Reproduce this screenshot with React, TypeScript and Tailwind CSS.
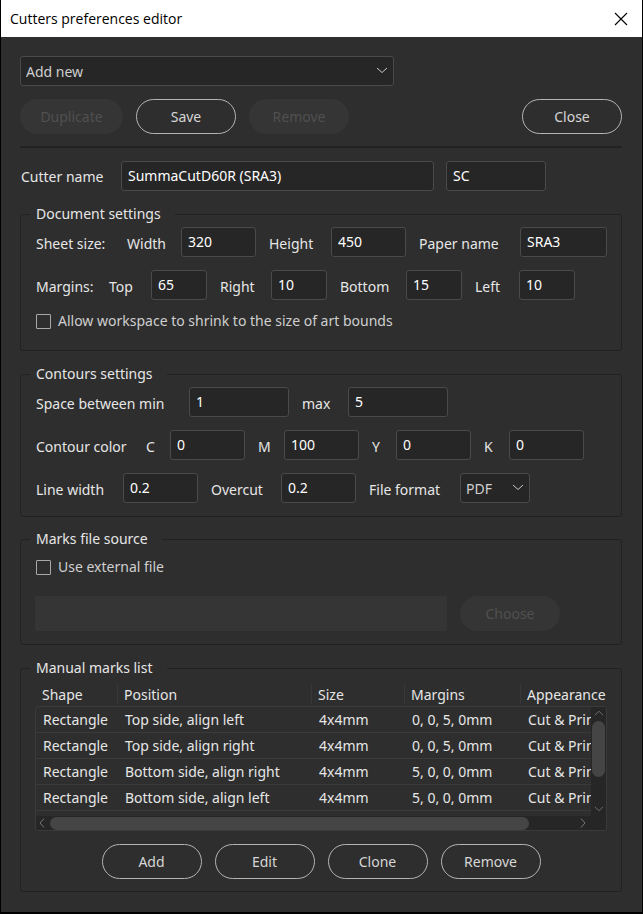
import type { ReactNode } from 'react';

const boxClass = 'h-[30px] rounded-[3px] border border-[#4a4a4a] bg-[#262626] text-[14px] outline-none';
const fieldClass = `${boxClass} px-[6px] pb-0.5 text-white`;
const selectClass = `${boxClass} col-start-1 row-start-1 w-full appearance-none px-[5px] text-[#cfcfcf]`;
const pillClass =
  'h-[35px] w-[100px] shrink-0 rounded-full border border-[#b4b4b4] text-[14px] text-[#d6d6d6]';
const disabledPillClass = 'h-[35px] shrink-0 rounded-full bg-[#353535] text-[14px] text-[#505050]';

function Chevron({ className }: { className: string }) {
  return (
    <svg className={className} viewBox="0 0 12 7" fill="none" stroke="currentColor" aria-hidden="true">
      <path d="M1 1 6 5.5 11 1" />
    </svg>
  );
}

function Select({ id, label, option }: { id: string; label?: string; option: string }) {
  return (
    <div className="grid items-center">
      <select id={id} aria-label={label} className={selectClass}>
        <option>{option}</option>
      </select>
      <Chevron className="pointer-events-none col-start-1 row-start-1 mr-[6px] mb-0.5 h-[7px] w-3 justify-self-end text-[#c8c8c8]" />
    </div>
  );
}

function Group({ title, className, children }: { title: string; className: string; children: ReactNode }) {
  return (
    <fieldset className={`min-w-0 rounded-[3px] border border-[#222222] px-[15px] ${className}`}>
      <legend className="-ml-[6px] pr-[14px] pl-[6px] text-[14px] leading-5">{title}</legend>
      {children}
    </fieldset>
  );
}

function Row({ children }: { children: ReactNode }) {
  return <div className="mb-[13px] flex items-center">{children}</div>;
}

type FieldProps = { id: string; label: string; labelWidth: string; width: string; value: string };

function Field({ id, label, labelWidth, width, value }: FieldProps) {
  return (
    <div className="mr-[13px] flex shrink-0 items-center last:mr-0">
      <label htmlFor={id} className={`pt-0.5 whitespace-nowrap ${labelWidth}`}>
        {label}
      </label>
      <input id={id} className={`${fieldClass} ${width}`} defaultValue={value} />
    </div>
  );
}

function Check({ id, label }: { id: string; label: string }) {
  return (
    <div className="flex items-center gap-[7px] text-[#cfcfcf]">
      <input
        id={id}
        type="checkbox"
        className="size-[15px] appearance-none rounded-[1px] border border-[#a8a8a8] checked:bg-[#a8a8a8]"
      />
      <label htmlFor={id} className="leading-4">
        {label}
      </label>
    </div>
  );
}

const marks = [
  ['Rectangle', 'Top side, align left', '4x4mm', '0, 0, 5, 0mm', 'Cut & Print'],
  ['Rectangle', 'Top side, align right', '4x4mm', '0, 0, 5, 0mm', 'Cut & Print'],
  ['Rectangle', 'Bottom side, align right', '4x4mm', '5, 0, 0, 0mm', 'Cut & Print'],
  ['Rectangle', 'Bottom side, align left', '4x4mm', '5, 0, 0, 0mm', 'Cut & Print'],
];

const columns = [
  { name: 'Shape', width: 'w-[82px]' },
  { name: 'Position', width: 'w-[194px]' },
  { name: 'Size', width: 'w-[93px]' },
  { name: 'Margins', width: 'w-[116px]' },
  { name: 'Appearance', width: '' },
];

function MarksTable() {
  return (
    <div className="relative -mx-px h-[147px] overflow-hidden pl-px">
      <table className="w-full table-fixed border-separate border-spacing-0 text-left">
        <thead>
          <tr>
            {columns.map((c) => (
              <th key={c.name} className={`h-[23px] p-0 align-top font-normal ${c.width}`}>
                <div className="h-5 border-r border-[#383838] pl-[6px] leading-[22px] whitespace-nowrap [th:last-child>&]:border-0">
                  {c.name}
                </div>
              </th>
            ))}
          </tr>
        </thead>
        <tbody>
          {marks.map((m) => (
            <tr key={m[1]}>
              {m.map((cell, i) => (
                <td
                  key={i}
                  className="h-[26px] overflow-hidden border-b border-[#3a3a3a] p-0 pl-[7px] whitespace-nowrap"
                >
                  {cell}
                </td>
              ))}
            </tr>
          ))}
        </tbody>
      </table>
      <div className="absolute inset-x-0 top-[22px] bottom-0 flex flex-col overflow-hidden rounded-[3px] border border-[#3a3a3a]">
        <div className="flex min-h-0 flex-1 justify-end">
          <div className="flex w-[15px] flex-col items-center bg-[#262626] text-[#777777]">
            <Chevron className="my-[3px] h-[6px] w-[10px] shrink-0 rotate-180" />
            <div className="mt-0.5 h-14 w-[13px] shrink-0 rounded-full bg-[#454545]" />
            <Chevron className="mt-auto mb-1 h-[6px] w-[10px] shrink-0" />
          </div>
        </div>
        <div className="flex h-[14px] items-center bg-[#262626] text-[#777777]">
          <svg className="ml-[3px] h-[10px] w-[6px]" viewBox="0 0 6 10" fill="none" stroke="currentColor">
            <path d="M5 0.5 1 5 5 9.5" />
          </svg>
          <div className="ml-[5px] h-[13px] w-[84%] rounded-full bg-[#454545]" />
          <svg className="mr-5 ml-auto h-[10px] w-[6px]" viewBox="0 0 6 10" fill="none" stroke="currentColor">
            <path d="M1 0.5 5 5 1 9.5" />
          </svg>
        </div>
      </div>
    </div>
  );
}

export default function App() {
  return (
    <div className="flex min-h-screen flex-col border-x border-b-2 border-black bg-[#2e2e2e] font-['Noto_Sans',sans-serif] text-[14px] text-[#e6e6e6]">
      <header className="flex h-[37px] items-center justify-between bg-white pr-[14px] pl-[9px] text-black">
        <h1 className="font-['Open_Sans',sans-serif] text-[14px]">Cutters preferences editor</h1>
        <button type="button" aria-label="Close window">
          <svg className="size-[14px]" viewBox="0 0 14 14" fill="none" stroke="currentColor" strokeWidth="1.1">
            <path d="m1 1 12 12M13 1 1 13" />
          </svg>
        </button>
      </header>
      <main className="pt-[19px] pr-5 pl-[19px]">
        <div className="w-[374px]">
          <Select id="cutter" label="Cutter" option="Add new" />
        </div>

        <div className="mt-[13px] flex gap-[13px]">
          <button type="button" disabled className={`${disabledPillClass} w-[103px]`}>
            Duplicate
          </button>
          <button type="button" className={pillClass}>
            Save
          </button>
          <button type="button" disabled className={`${disabledPillClass} w-[100px]`}>
            Remove
          </button>
          <button type="button" className={`${pillClass} ml-auto`}>
            Close
          </button>
        </div>

        <hr className="mt-3 mb-[13px] border-t-2 border-[#222222]" />

        <div className="flex items-center">
          <label htmlFor="name" className="w-[101px] pl-px">
            Cutter name
          </label>
          <input id="name" className={`${fieldClass} w-[313px]`} defaultValue="SummaCutD60R (SRA3)" />
          <input
            aria-label="Short name"
            className={`${fieldClass} ml-3 w-[100px]`}
            defaultValue="SC"
          />
        </div>

        <Group title="Document settings" className="mt-[13px] pt-[3px] pb-[21px]">
          <Row>
            <span className="w-[91px] shrink-0 pt-0.5">Sheet size:</span>
            <Field id="w" label="Width" labelWidth="w-[54px]" width="w-[75px]" value="320" />
            <Field id="h" label="Height" labelWidth="w-[62px]" width="w-[75px]" value="450" />
            <Field id="paper" label="Paper name" labelWidth="w-[101px]" width="w-[87px]" value="SRA3" />
          </Row>
          <Row>
            <span className="w-[73px] shrink-0 pt-0.5">Margins:</span>
            <Field id="top" label="Top" labelWidth="w-[42px]" width="w-[56px]" value="65" />
            <Field id="right" label="Right" labelWidth="w-[51px]" width="w-[56px]" value="10" />
            <Field id="bottom" label="Bottom" labelWidth="w-[66px]" width="w-[56px]" value="15" />
            <Field id="left" label="Left" labelWidth="w-[44px]" width="w-[56px]" value="10" />
          </Row>
          <Check id="shrink" label="Allow workspace to shrink to the size of art bounds" />
        </Group>

        <Group title="Contours settings" className="mt-[13px] pt-[3px]">
          <Row>
            <Field id="min" label="Space between min" labelWidth="w-[153px]" width="w-[100px]" value="1" />
            <Field id="max" label="max" labelWidth="w-[46px]" width="w-[100px]" value="5" />
          </Row>
          <Row>
            <span className="w-[110px] shrink-0 pt-0.5">Contour color</span>
            <Field id="c" label="C" labelWidth="w-[24px]" width="w-[75px]" value="0" />
            <Field id="m" label="M" labelWidth="w-[26px]" width="w-[75px]" value="100" />
            <Field id="y" label="Y" labelWidth="w-[24px]" width="w-[75px]" value="0" />
            <Field id="k" label="K" labelWidth="w-[25px]" width="w-[75px]" value="0" />
          </Row>
          <Row>
            <Field id="line" label="Line width" labelWidth="w-[87px]" width="w-[75px]" value="0.2" />
            <Field id="overcut" label="Overcut" labelWidth="w-[70px]" width="w-[75px]" value="0.2" />
            <label htmlFor="format" className="w-[91px] pt-0.5">
              File format
            </label>
            <div className="w-[70px]">
              <Select id="format" option="PDF" />
            </div>
          </Row>
        </Group>

        <Group title="Marks file source" className="mt-3 pt-[10px] pb-[13px]">
          <Check id="external" label="Use external file" />
          <div className="-ml-px mt-[21px] flex gap-[13px]">
            <input
              aria-label="External file path"
              disabled
              className="h-[35px] w-[412px] rounded-[2px] bg-[#353535] px-[6px]"
            />
            <button type="button" disabled className={`${disabledPillClass} w-[100px]`}>
              Choose
            </button>
          </div>
        </Group>

        <Group title="Manual marks list" className="mt-[13px] pt-[6px] pb-3">
          <MarksTable />
          <div className="mt-[13px] flex justify-center gap-[13px]">
            {['Add', 'Edit', 'Clone', 'Remove'].map((name) => (
              <button key={name} type="button" className={pillClass}>
                {name}
              </button>
            ))}
          </div>
        </Group>
      </main>
    </div>
  );
}
